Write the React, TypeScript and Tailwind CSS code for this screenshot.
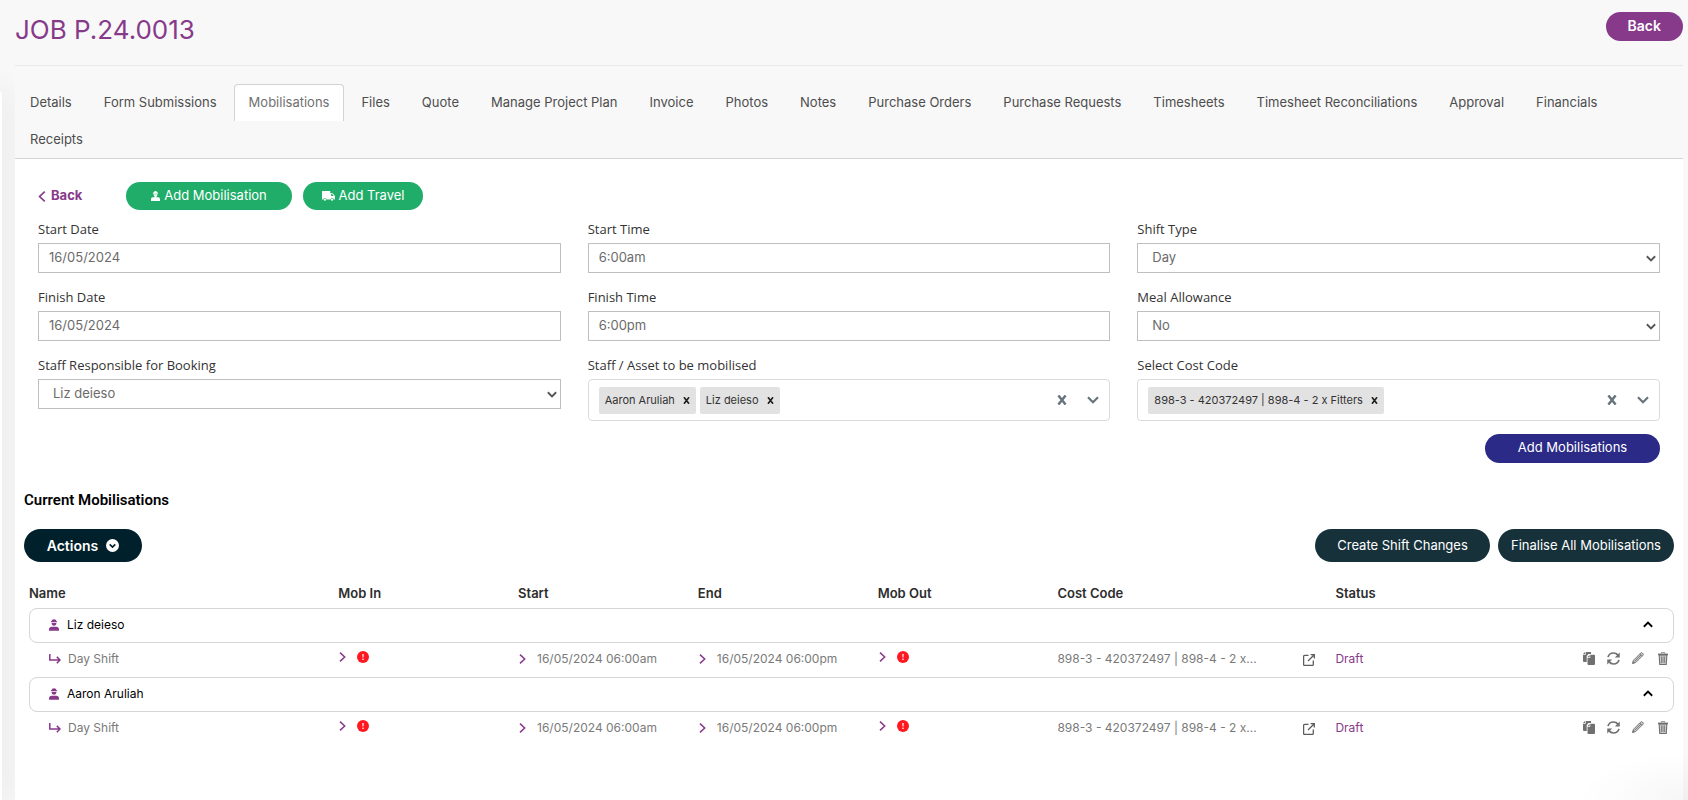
import React, { useState } from "react";

const TABS = [
  "Details",
  "Form Submissions",
  "Mobilisations",
  "Files",
  "Quote",
  "Manage Project Plan",
  "Invoice",
  "Photos",
  "Notes",
  "Purchase Orders",
  "Purchase Requests",
  "Timesheets",
  "Timesheet Reconciliations",
  "Approval",
  "Financials",
  "Receipts",
];

const PEOPLE = ["Liz deieso", "Aaron Aruliah"];

type IconProps = { className?: string };

function Chevron({ className = "" }: IconProps) {
  return (
    <svg viewBox="0 0 12 8" className={className} fill="none" stroke="currentColor" strokeWidth="2.2" aria-hidden="true">
      <path d="M1 1.300 6 6.300l5-5" />
    </svg>
  );
}

function ChevronRight({ className = "" }: IconProps) {
  return (
    <svg viewBox="0 0 7 10" className={className} fill="none" stroke="currentColor" strokeWidth="1.5" aria-hidden="true">
      <path d="M1 .6 5.700 5 1 9.400" />
    </svg>
  );
}

function Cross({ className = "" }: IconProps) {
  return (
    <svg viewBox="0 0 10 10" className={className} fill="none" stroke="currentColor" strokeWidth="2.4" aria-hidden="true">
      <path d="M1.400.4 8.600 9.600M8.600.4 1.400 9.600" />
    </svg>
  );
}

function Worker({ className = "" }: IconProps) {
  return (
    <svg viewBox="0 0 20 24" className={className} fill="currentColor" aria-hidden="true">
      <path d="M5 4.600C5.400 1.800 7.300.4 10 .4s4.600 1.400 5 4.200h1v1.900H4V4.600z" />
      <path d="M5.200 8h9.600c0 3.500-2 5.600-4.800 5.600S5.200 11.500 5.200 8z" />
      <path d="M0 23.400v-2.800C0 17.300 2.200 15.400 5.400 15.400h9.200c3.200 0 5.400 1.900 5.400 5.200v2.800z" />
    </svg>
  );
}

function HardHatPerson({ className = "" }: IconProps) {
  return (
    <svg viewBox="0 0 18 20" className={className} fill="currentColor" aria-hidden="true">
      <path d="M5 3.600C5.400 1.400 6.800 0 9 0s3.600 1.400 4 3.600h1.200v2H3.800v-2z" />
      <path d="M5 6.400h8c0 2-.8 3.400-2 4.300v2h3c2.600 0 4 1.800 4 4.300v3H0v-3c0-2.500 1.400-4.300 4-4.300h3v-2c-1.200-.9-2-2.300-2-4.300z" />
    </svg>
  );
}

function Truck({ className = "" }: IconProps) {
  return (
    <svg viewBox="0 0 26 20" className={className} fill="currentColor" aria-hidden="true">
      <path d="M1 0h15.500v4.400h4.600L25.800 9.800v7h-2.300a3.300 3.300 0 0 0-6.500 0H9a3.300 3.300 0 0 0-6.500 0H0V1a1 1 0 0 1 1-1zM18.300 6.200v3.600h5.200l-3.100-3.600z" fillRule="evenodd" />
      <circle cx="5.750" cy="17.400" r="2.200" />
      <circle cx="20.250" cy="17.400" r="2.200" />
    </svg>
  );
}

function Branch({ className = "" }: IconProps) {
  return (
    <svg viewBox="0 0 12 10" className={className} fill="none" stroke="currentColor" strokeWidth="1.500" aria-hidden="true">
      <path d="M.8 0v6h10M7.800 2.900 11 6 7.800 9.200" />
    </svg>
  );
}

function Alert({ className = "" }: IconProps) {
  return (
    <svg viewBox="0 0 12 12" className={className} aria-hidden="true">
      <circle cx="6" cy="6" r="6" fill="#ff1820" />
      <path d="M5.300 3h1.400L6.500 6.500h-1z" fill="#fff" />
      <circle cx="6" cy="8.200" r=".8" fill="#fff" />
    </svg>
  );
}

function OpenLink({ className = "" }: IconProps) {
  return (
    <svg viewBox="0 0 12 12" className={className} fill="none" stroke="currentColor" strokeWidth="1.300" aria-hidden="true">
      <path d="M5.500 1.300H1.600a1 1 0 0 0-1 1v8.100a1 1 0 0 0 1 1h7.700a1 1 0 0 0 1-1V6.500" />
      <path d="M7.600.7h3.700v3.700M11 1 5 7" />
    </svg>
  );
}

function Copy({ className = "" }: IconProps) {
  return (
    <svg viewBox="0 0 24 26" className={className} fill="currentColor" aria-hidden="true">
      <path d="M5.500 0H16v4H11L7.400 8v12H2a2 2 0 0 1-2-2V5.500h5.500z" />
      <path d="M0 4.200 4.200 0v4.200z" />
      <path d="M14.500 5.600H22a2 2 0 0 1 2 2V24a2 2 0 0 1-2 2H11a2 2 0 0 1-2-2V11.500h5.500z" />
      <path d="M9 10.200 13.200 5.800v4.400z" />
    </svg>
  );
}

function Sync({ className = "" }: IconProps) {
  return (
    <svg viewBox="0 0 26 26" className={className} aria-hidden="true">
      <g fill="none" stroke="currentColor" strokeWidth="3.4">
        <path d="M2 10.200C3.400 5 7.800 2 13 2c3.600 0 6.600 1.400 8.800 4.200" />
        <path d="M24 15.800C22.600 21 18.200 24 13 24c-3.600 0-6.600-1.400-8.800-4.200" />
      </g>
      <path d="M25.500 1v9.800h-9.800zM.5 25v-9.800h9.800z" fill="currentColor" />
    </svg>
  );
}

function Pencil({ className = "" }: IconProps) {
  return (
    <svg viewBox="0 0 24 24" className={className} aria-hidden="true">
      <path d="M1.200 22.800 3 16.500 17.800 1.700a1.800 1.800 0 0 1 2.500 0l2 2a1.800 1.800 0 0 1 0 2.500L7.500 21z" fill="#c6c6c6" stroke="currentColor" strokeWidth="1.800" />
      <path d="M5.500 18.500 18 6M15.500 4l4.500 4.500" fill="none" stroke="currentColor" strokeWidth="1.600" />
      <path d="M.4 23.600 2 18l4 4z" fill="currentColor" />
    </svg>
  );
}

function Trash({ className = "" }: IconProps) {
  return (
    <svg viewBox="0 0 20 26" className={className} aria-hidden="true">
      <path d="M2.300 6h15.400l-1.200 18.900h-13z" fill="#c9c9c9" stroke="currentColor" strokeWidth="2.200" />
      <path d="M0 3.200h20v3.200H0z" fill="currentColor" />
      <path d="M6.500 3V1.200h7V3M7 9v13M10 9v13M13 9v13" fill="none" stroke="currentColor" strokeWidth="1.500" />
    </svg>
  );
}

function Field({ id, label, children }: { id: string; label: string; children: React.ReactNode }) {
  return (
    <div className="flex min-w-0 flex-col gap-1">
      <label htmlFor={id} className="font-['Open_Sans',sans-serif] text-[13px] leading-5 text-[#333]">
        {label}
      </label>
      {children}
    </div>
  );
}

function TextField({ id, label, value }: { id: string; label: string; value: string }) {
  return (
    <Field id={id} label={label}>
      <input
        id={id}
        defaultValue={value}
        className="h-[30px] w-full border border-[#bfbfbf] bg-white px-[10px] pb-[2px] text-[13px] text-[#6b6b6b]"
      />
    </Field>
  );
}

function SelectField({ id, label, options }: { id: string; label: string; options: string[] }) {
  return (
    <Field id={id} label={label}>
      <div className="relative">
        <select
          id={id}
          className="block h-[30px] w-full appearance-none border border-[#bfbfbf] bg-white px-[14px] text-[13px] text-[#6b6b6b]"
        >
          {options.map((option) => (
            <option key={option}>{option}</option>
          ))}
        </select>
        <Chevron className="pointer-events-none absolute top-[12px] right-1 h-[7px] w-[10px] text-[#555]" />
      </div>
    </Field>
  );
}

function MultiSelect({ id, label, initial }: { id: string; label: string; initial: string[] }) {
  const [items, setItems] = useState(initial);
  return (
    <Field id={id} label={label}>
      <div className="flex h-[42px] items-center rounded border border-[#d9dcdc] bg-white px-[10px]">
        <div className="flex min-w-0 flex-1 gap-1">
          {items.map((item) => (
            <span key={item} className="flex h-[27px] items-center gap-2 rounded-xs bg-[#e2e2e2] px-[6px] text-[11px] whitespace-nowrap text-[#333]">
              {item}
              <button type="button" aria-label={`Remove ${item}`} onClick={() => setItems(items.filter((i) => i !== item))}>
                <Cross className="size-[7px] text-[#1f1f1f]" />
              </button>
            </span>
          ))}
          <input id={id} className="w-2 min-w-0 flex-1 outline-none" />
        </div>
        <button type="button" aria-label="Clear all" onClick={() => setItems([])} className="px-[10px]">
          <Cross className="size-[10px] text-[#66757b]" />
        </button>
        <button type="button" aria-label="Open list" className="pl-[10px]">
          <Chevron className="h-2 w-3 text-[#66757b]" />
        </button>
      </div>
    </Field>
  );
}

function MobCell() {
  return (
    <td className="p-0">
      <div className="flex items-center gap-[11px] pb-[6px] pl-[1px]">
        <ChevronRight className="h-[10px] w-[7px] text-[#873a8a]" />
        <Alert className="size-3" />
      </div>
    </td>
  );
}

function TimeEntry({ text }: { text: string }) {
  return (
    <div className="flex items-center gap-[11px] pb-[2px] pl-[1px]">
      <ChevronRight className="h-[10px] w-[7px] text-[#873a8a]" />
      {text}
    </div>
  );
}

function PersonRows({ name }: { name: string }) {
  const [open, setOpen] = useState(true);
  return (
    <tbody>
      <tr>
        <td colSpan={7} className="p-0">
          <button
            type="button"
            aria-expanded={open}
            onClick={() => setOpen(!open)}
            className="flex h-[35px] w-full items-center rounded-lg border border-[#d6d6d6] bg-white pr-5 pb-[2px] pl-[19px] text-xs text-black"
          >
            <Worker className="h-3 w-[10px] text-[#873a8a]" />
            <span className="flex-1 pl-2 text-left">{name}</span>
            <Chevron className={open ? "h-[7px] w-[10px] rotate-180" : "h-[7px] w-[10px]"} />
          </button>
        </td>
      </tr>
      {open && (
        <tr className="h-[34px] text-xs text-[#7a7a7a]">
          <td className="p-0 pl-5">
            <div className="flex items-center gap-[7px] pb-[2px]">
              <Branch className="h-[10px] w-3 text-[#873a8a]" />
              Day Shift
            </div>
          </td>
          <MobCell />
          <td className="p-0">
            <TimeEntry text="16/05/2024 06:00am" />
          </td>
          <td className="p-0">
            <TimeEntry text="16/05/2024 06:00pm" />
          </td>
          <MobCell />
          <td className="p-0">
            <div className="flex items-center justify-between pr-5 pb-[2px]">
              <span>898-3 - 420372497 | 898-4 - 2 x...</span>
              <a href="#cost-code" aria-label="Open cost code" className="pt-[2px]">
                <OpenLink className="size-3 text-[#5c5c5c]" />
              </a>
            </div>
          </td>
          <td className="p-0">
            <div className="flex items-center justify-between pr-[6px] pb-[2px]">
              <span className="text-[#873a8a]">Draft</span>
              <div className="flex items-center gap-3 pb-[2px] text-[#707070]">
                <button type="button" aria-label="Copy">
                  <Copy className="h-[13px] w-3" />
                </button>
                <button type="button" aria-label="Refresh">
                  <Sync className="size-[13px]" />
                </button>
                <button type="button" aria-label="Edit">
                  <Pencil className="size-3" />
                </button>
                <button type="button" aria-label="Delete" className="pl-[2px]">
                  <Trash className="h-[13px] w-[10px]" />
                </button>
              </div>
            </div>
          </td>
        </tr>
      )}
    </tbody>
  );
}

export default function App() {
  return (
    <div className="relative flex min-h-screen overflow-hidden bg-[#f8f8f8] pr-[5px] font-[Inter,sans-serif] text-[13px] text-[#333]">
      <div className="flex w-[15px] shrink-0 pt-[92px]">
        <div className="w-[2px] rounded-tr-sm bg-white shadow-[0_0_30px_4px_rgba(0,0,0,0.12)]" />
      </div>

      <div className="z-10 flex min-w-0 flex-1 flex-col">
        <header className="flex h-[66px] items-start justify-between border-b border-[#e9e9e9] bg-[#f8f8f8] pt-3">
          <h1 className="text-[26px] leading-9 text-[#873a8a]">JOB P.24.0013</h1>
          <button type="button" className="h-[29px] rounded-full bg-[#873a8a] px-[22px] pb-[1px] text-sm font-semibold text-white">
            Back
          </button>
        </header>

        <nav className="flex flex-wrap gap-x-[2px] border-b border-[#d3d3d3] bg-[#f8f8f8] pt-[18px]">
          {TABS.map((tab) => (
            <a
              key={tab}
              href="#tab"
              className={
                tab === "Mobilisations"
                  ? "h-[37px] rounded-t border border-b-0 border-[#d3d3d3] bg-white px-[14px] leading-[35px] text-[#707070]"
                  : "h-[37px] border border-b-0 border-transparent px-[14px] leading-[35px] text-[#4d4d4d]"
              }
            >
              {tab}
            </a>
          ))}
        </nav>

        <main className="flex-1 bg-white">
          <section className="px-[23px] pt-[23px]">
            <div className="flex items-center text-[13px]">
              <a href="#back" className="flex w-[88px] items-center gap-[5px] font-bold text-[#873a8a]">
                <ChevronRight className="h-[11px] w-2 rotate-180" />
                Back
              </a>
              <button type="button" className="flex h-7 w-[166px] items-center justify-center gap-1 rounded-full bg-[#20ad69] text-white">
                <HardHatPerson className="h-[10px] w-[9px]" />
                Add Mobilisation
              </button>
              <button type="button" className="ml-[11px] flex h-7 w-[120px] items-center justify-center gap-1 rounded-full bg-[#20ad69] text-white">
                <Truck className="h-[10px] w-[13px]" />
                Add Travel
              </button>
            </div>

            <form className="mt-[9px] grid grid-cols-3 items-start gap-x-[27px] gap-y-[14px]">
              <TextField id="start-date" label="Start Date" value="16/05/2024" />
              <TextField id="start-time" label="Start Time" value="6:00am" />
              <SelectField id="shift-type" label="Shift Type" options={["Day", "Night"]} />
              <TextField id="finish-date" label="Finish Date" value="16/05/2024" />
              <TextField id="finish-time" label="Finish Time" value="6:00pm" />
              <SelectField id="meal" label="Meal Allowance" options={["No", "Yes"]} />
              <SelectField id="staff" label="Staff Responsible for Booking" options={["Liz deieso", "Aaron Aruliah"]} />
              <MultiSelect id="assets" label="Staff / Asset to be mobilised" initial={["Aaron Aruliah", "Liz deieso"]} />
              <MultiSelect id="cost-code" label="Select Cost Code" initial={["898-3 - 420372497 | 898-4 - 2 x Fitters"]} />
            </form>
            <div className="mt-[13px] flex justify-end">
              <button type="button" className="h-[29px] w-[175px] rounded-full bg-[#2b2a86] pb-[1px] text-white">
                Add Mobilisations
              </button>
            </div>
          </section>

          <section className="px-[9px] pt-[25px]">
            <h2 className="font-[Roboto,sans-serif] text-[15px] leading-6 font-semibold text-black">Current Mobilisations</h2>
            <div className="mt-[17px] flex items-center gap-2">
              <button type="button" className="mr-auto flex h-[33px] w-[118px] items-center justify-center gap-2 rounded-full bg-[#00202b] text-sm font-semibold text-white">
                Actions
                <svg viewBox="0 0 13 13" className="size-[13px]" aria-hidden="true">
                  <circle cx="6.500" cy="6.500" r="6.500" fill="#fff" />
                  <path d="M3.700 5.400 6.500 8.100l2.800-2.700" fill="none" stroke="#00202b" strokeWidth="1.600" />
                </svg>
              </button>
              <button type="button" className="h-[33px] w-[175px] rounded-full bg-[#17313a] text-white">
                Create Shift Changes
              </button>
              <button type="button" className="h-[33px] w-[176px] rounded-full bg-[#17313a] text-white">
                Finalise All Mobilisations
              </button>
            </div>

            <div className="mt-[18px] pl-[5px]">
              <table className="w-full table-fixed border-collapse text-left">
                <colgroup>
                  <col className="w-[18.8%]" />
                  <col className="w-[10.93%]" />
                  <col className="w-[10.93%]" />
                  <col className="w-[10.93%]" />
                  <col className="w-[10.93%]" />
                  <col className="w-[16.9%]" />
                  <col />
                </colgroup>
                <thead>
                  <tr className="h-7 text-[#2d2d2d]">
                    {["Name", "Mob In", "Start", "End", "Mob Out", "Cost Code", "Status"].map((heading) => (
                      <th key={heading} scope="col" className="p-0 font-semibold">
                        {heading}
                      </th>
                    ))}
                  </tr>
                </thead>
                {PEOPLE.map((name) => (
                  <PersonRows key={name} name={name} />
                ))}
              </table>
            </div>
          </section>
        </main>
      </div>
      <div className="pointer-events-none absolute right-0 bottom-0 z-20 h-12 w-28 bg-[radial-gradient(ellipse_at_bottom_right,rgba(0,0,0,0.035),transparent_70%)]" />
    </div>
  );
}
